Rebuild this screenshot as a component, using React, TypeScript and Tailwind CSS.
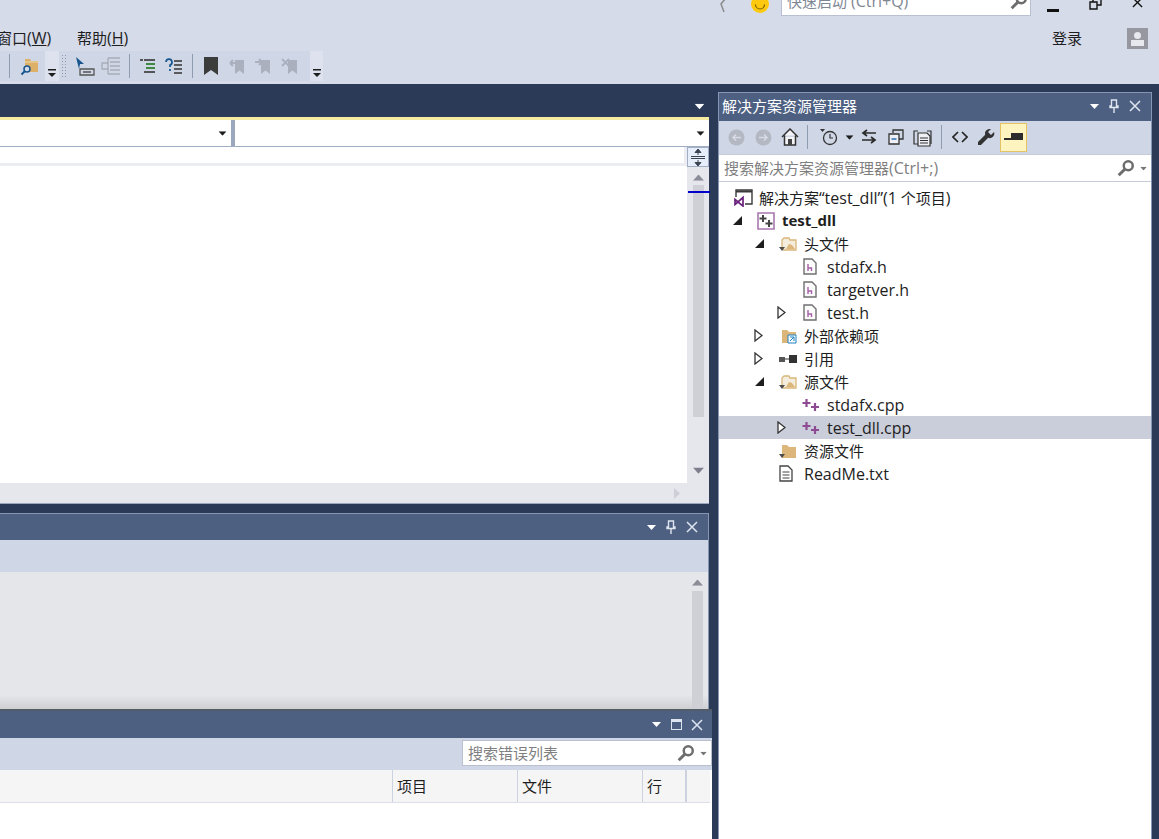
import type { ReactNode } from 'react'

const font = '[font-family:"Open_Sans","Noto_Sans_CJK_SC",sans-serif]'

// latin runs sit a pixel larger than the CJK around them, closer to the original UI font
function L({ children }: { children: ReactNode }) {
  return <span className="text-[16px]">{children}</span>
}

function Tri({ className = '' }: { className?: string }) {
  return (
    <svg width="9" height="5" viewBox="0 0 9 5" className={className}>
      <path d="M0 0h9L4.5 5z" fill="currentColor" />
    </svg>
  )
}

function Overflow() {
  return (
    <svg width="10" height="10" viewBox="0 0 10 10">
      <path d="M1 1h8v1.5H1z" fill="#1e1e1e" />
      <path d="M1 5h8L5 9z" fill="#1e1e1e" />
    </svg>
  )
}

function Pin() {
  return (
    <svg width="10" height="14" viewBox="0 0 10 14">
      <path d="M2.5 1h5v6h1.5v1.5H1V7h1.5zM5 8.5V14" fill="none" stroke="currentColor" strokeWidth="1.4" />
    </svg>
  )
}

function CloseX({ size = 12 }: { size?: number }) {
  return (
    <svg width={size} height={size} viewBox="0 0 12 12">
      <path d="M1 1l10 10M11 1L1 11" stroke="currentColor" strokeWidth="1.5" />
    </svg>
  )
}

function Search({ color = '#6d6d6d' }: { color?: string }) {
  return (
    <svg width="18" height="18" viewBox="0 0 16 16">
      <circle cx="10" cy="6" r="4" fill="none" stroke={color} strokeWidth="2.2" />
      <path d="M7 9l-5.5 5.5" stroke={color} strokeWidth="2.6" />
    </svg>
  )
}

function Sep({ className = '' }: { className?: string }) {
  return <div className={`w-px h-[24px] bg-[#8f9bb0] ${className}`} />
}

function GreyBookmark({ mark }: { mark: ReactNode }) {
  return (
    <svg width="18" height="18" viewBox="0 0 18 18">
      <path d="M7 3h9v14l-4.5-3.5L7 17z" fill="#aab0bd" />
      {mark}
    </svg>
  )
}

function FolderSearch() {
  return (
    <svg width="20" height="20" viewBox="0 0 20 20">
      <path d="M5 3h5l1 2h7v11H5z" fill="#dcb067" />
      <path d="M5 6h13" stroke="#efd9ad" strokeWidth="1" />
      <circle cx="7" cy="13" r="3" fill="#d6dbe9" stroke="#17568f" strokeWidth="1.5" />
      <path d="M5 15l-3.5 3.5" stroke="#17568f" strokeWidth="2" />
    </svg>
  )
}

function TopBar() {
  return (
    <div className="h-[84px] bg-[#d6dbe9] overflow-hidden shrink-0">
      <div className="h-[16px] flex items-end justify-end overflow-hidden">
        <svg width="8" height="14" viewBox="0 0 8 14" className="mb-[4px] mr-[2px]">
          <path d="M7 0L2 6l3 8" fill="none" stroke="#8a8a8a" strokeWidth="1.5" />
        </svg>
        <svg width="18" height="18" viewBox="0 0 18 18" className="ml-[22px] mb-[3px] shrink-0">
          <circle cx="9" cy="9" r="9" fill="#fdc90f" />
          <path d="M4.5 9.5a4.5 4.5 0 0 0 9 0" fill="none" stroke="#7a6000" strokeWidth="1.2" />
        </svg>
        <div className="ml-[12px] w-[250px] h-[30px] bg-white border border-[#b8c0d2] flex items-center justify-between pl-[5px] pr-[2px] text-[15px] text-[#7f8794] shrink-0">
          <span className={`${font} whitespace-nowrap`}>
            快速启动 <L>(Ctrl+Q)</L>
          </span>
          <Search />
        </div>
        <div className="w-[128px] flex items-center pb-[2px] text-[#111] shrink-0">
          <div className="w-[12px] h-[3px] bg-[#111] ml-[16px] mt-[5px]" />
          <svg width="13" height="13" viewBox="0 0 13 13" className="ml-[30px] -translate-y-[4px]">
            <path d="M1 5h7v7H1zM4 5V1h8v7H8" fill="none" stroke="#111" strokeWidth="1.4" />
          </svg>
          <div className="ml-[30px] -translate-y-[5px]">
            <CloseX size={11} />
          </div>
        </div>
      </div>
      <div className={`${font} h-[35px] pt-[9px] flex items-center justify-between text-[15px] text-[#1e1e1e]`}>
        <div className="flex items-center -ml-[3px]">
          <span className="w-[80px] whitespace-nowrap">
            窗口<L>(<span className="underline">W</span>)</L>
          </span>
          <span className="whitespace-nowrap">
            帮助<L>(<span className="underline">H</span>)</L>
          </span>
        </div>
        <div className="flex items-center">
          <span>登录</span>
          <div className="ml-[45px] mr-[11px] w-[21px] h-[21px] bg-[#96979f] flex flex-col items-center justify-end pb-[3px]">
            <div className="w-[7px] h-[7px] rounded-full bg-[#e8e9ee] mb-px" />
            <div className="w-[13px] h-[6px] bg-[#e8e9ee]" />
          </div>
        </div>
      </div>
      <div className="h-[30px] flex items-stretch">
        <div className="w-[45px] bg-[#cfd6e5] flex items-center">
          <Sep className="ml-[9px]" />
          <div className="ml-[10px]">
            <FolderSearch />
          </div>
        </div>
        <div className="w-[14px] bg-[#dde2ee] flex items-end justify-center pb-[3px]">
          <Overflow />
        </div>
        <div className="w-[251px] bg-[#cfd6e5] flex items-center pl-[2px]">
          <div className="w-[6px] h-[24px] bg-[radial-gradient(#8f97a8_1px,transparent_1px)] bg-[length:3px_3px]" />
          <svg width="20" height="20" viewBox="0 0 20 20" className="ml-[8px]">
            <path d="M5 13h14v6H5z" fill="none" stroke="#555" strokeWidth="1.3" />
            <path d="M8 16h8" stroke="#555" strokeWidth="1.5" />
            <path d="M1 1l8 7H5l-1 5z" fill="#17568f" />
          </svg>
          <svg width="20" height="20" viewBox="0 0 20 20" className="ml-[6px]">
            <path d="M7 2h12M9 6h10M9 10h10M9 14h10M7 18h12M7 2v16M1 7h6v6H1z" fill="none" stroke="#a9aeb8" strokeWidth="1.4" />
          </svg>
          <Sep className="ml-[8px]" />
          <svg width="16" height="16" viewBox="0 0 16 16" className="ml-[10px]">
            <path d="M0 2h3M4 2h11M6 6h9M6 10h9M4 14h11" stroke="#2b2b2b" strokeWidth="1.3" />
            <path d="M6 6h9M6 10h9" stroke="#3a9a3a" strokeWidth="1.6" />
          </svg>
          <svg width="18" height="16" viewBox="0 0 18 16" className="ml-[9px]">
            <path d="M1 4a3 3 0 1 1 4 3v2M5 11v2" fill="none" stroke="#17568f" strokeWidth="1.7" />
            <path d="M9 3h8M9 7h8M9 11h8M9 15h8" stroke="#333" strokeWidth="1.3" />
          </svg>
          <Sep className="ml-[9px]" />
          <svg width="18" height="20" viewBox="0 0 18 20" className="ml-[9px]">
            <path d="M2 1h14v18l-7-5-7 5z" fill="#3c3c3c" />
          </svg>
          <div className="ml-[8px]">
            <GreyBookmark mark={<path d="M9 6H2M2 6l3-3M2 6l3 3" fill="none" stroke="#aab0bd" strokeWidth="1.8" />} />
          </div>
          <div className="ml-[8px]">
            <GreyBookmark mark={<path d="M1 5h7M8 5L5 2M8 5L5 8" fill="none" stroke="#aab0bd" strokeWidth="1.8" />} />
          </div>
          <div className="ml-[9px]">
            <GreyBookmark mark={<path d="M1 2l7 7M8 2L1 9" fill="none" stroke="#aab0bd" strokeWidth="1.8" />} />
          </div>
        </div>
        <div className="w-[13px] bg-[#dde2ee] flex items-end justify-center pb-[3px]">
          <Overflow />
        </div>
      </div>
    </div>
  )
}

function TitleIcons({ restore }: { restore?: boolean }) {
  return (
    <div className="flex items-center text-[#dfe5ef]">
      <Tri className="text-white" />
      <div className="ml-[9px] w-[12px] flex justify-center">
        {restore ? <div className="w-[11px] h-[11px] border border-t-[3px] border-[#dfe5ef]" /> : <Pin />}
      </div>
      <div className="ml-[9px]">
        <CloseX />
      </div>
    </div>
  )
}

function Editor() {
  return (
    <div className="h-[420px] flex flex-col shrink-0">
      <div className="h-[33px] pt-[11px] flex justify-end items-center pr-[5px] text-white">
        <Tri className="scale-110" />
      </div>
      <div className="h-[3px] bg-[#f4eba0]" />
      <div className="h-[26px] bg-white flex">
        <div className="w-[231px] flex items-center justify-end pr-[4px] text-[#1e1e1e]">
          <Tri className="scale-90" />
        </div>
        <div className="w-[4px] bg-[#9aa7bf]" />
        <div className="flex-1 flex items-center justify-end pr-[4px] text-[#1e1e1e]">
          <Tri className="scale-90" />
        </div>
      </div>
      <div className="h-px bg-[#a0adc3]" />
      <div className="flex-1 flex min-h-0">
        <div className="flex-1 flex flex-col bg-white min-w-0">
          <div className="h-[19px] bg-[#ecedf2] pb-[3px]">
            <div className="h-full w-[684px] bg-white" />
          </div>
          <div className="flex-1" />
        </div>
        <div className="w-[22px] bg-[#e6e7ed] flex flex-col items-center">
          <div className="w-full h-[20px] bg-[#e6edfb] border border-[#a0adc3] flex items-center justify-center shrink-0">
            <svg width="14" height="17" viewBox="0 0 14 17">
              <path d="M0 7.5h14M0 9.5h14" stroke="#3c4452" strokeWidth="1" />
              <path d="M7 0l3 3.5H4zM7 17l-3-3.5h6zM7 3v3M7 11v3" fill="#3c4452" stroke="#3c4452" />
            </svg>
          </div>
          <Tri className="text-[#8b8d99] mt-[8px] rotate-180 scale-125 shrink-0" />
          <div className="relative w-[11px] h-[232px] bg-[#cfd0d6] mt-[5px] shrink-0">
            <div className="absolute top-[6px] -left-[5px] w-[22px] h-[2px] bg-[#0000cc]" />
          </div>
          <div className="flex-1" />
          <div className="h-[25px] flex items-center">
            <Tri className="text-[#7d7f8e] scale-125" />
          </div>
        </div>
      </div>
      <div className="h-[20px] bg-[#e6e7ed] flex items-center justify-end pr-[29px]">
        <svg width="6" height="11" viewBox="0 0 6 11">
          <path d="M0 0l6 5.5L0 11z" fill="#cdced6" />
        </svg>
      </div>
      <div className="h-px bg-[#9aa7bf]" />
    </div>
  )
}

function OutputPanel() {
  return (
    <div className="mt-[9px] h-[196px] flex flex-col border-t border-r border-[#8496b3] shrink-0">
      <div className="h-[26px] bg-[#4d6082] flex items-center justify-end pr-[10px] shrink-0">
        <TitleIcons />
      </div>
      <div className="h-[32px] bg-[#cfd6e5] shrink-0" />
      <div className="flex-1 bg-[#e5e6e9] flex flex-col items-end pr-[5px] bg-gradient-to-b from-[#e5e6e9] from-[90%] to-[#cfd0d2]">
        <div className="w-[11px] flex flex-col items-center flex-1">
          <Tri className="text-[#8b8d99] mt-[8px] rotate-180 scale-125" />
          <div className="w-[11px] flex-1 bg-[#cfd0d6] mt-[6px]" />
        </div>
      </div>
    </div>
  )
}

function ErrorPanel() {
  return (
    <div className={`${font} w-[712px] flex-1 flex flex-col min-h-0 border-t-2 border-[#555c69] bg-white`}>
      <div className="h-[27px] bg-[#4d6082] flex items-center justify-end pr-[9px] shrink-0">
        <TitleIcons restore />
      </div>
      <div className="h-[32px] bg-[#cfd6e5] flex justify-end pt-[2px] shrink-0">
        <div className="w-[250px] h-[26px] bg-white border border-[#b8c0d2] flex items-center justify-between pl-[5px] pr-[3px]">
          <span className="text-[15px] text-[#7f7f7f]">搜索错误列表</span>
          <div className="flex items-center gap-[4px]">
            <Search />
            <Tri className="text-[#777] scale-75" />
          </div>
        </div>
      </div>
      <div className="h-[33px] w-[710px] flex bg-[#f5f5f6] border-b border-[#dcdfea] text-[15px] text-[#1e1e1e] shrink-0">
        <div className="w-[393px] border-r border-[#cdd2e0]" />
        <div className="w-[125px] border-r border-[#cdd2e0] flex items-center pl-[4px]">项目</div>
        <div className="w-[125px] border-r border-[#cdd2e0] flex items-center pl-[4px]">文件</div>
        <div className="w-[44px] border-r-2 border-[#cdd2e0] flex items-center pl-[4px]">行</div>
      </div>
    </div>
  )
}

function FileH() {
  return (
    <svg width="16" height="17" viewBox="0 0 16 17">
      <path d="M2 1h8l4 4v11H2z" fill="#fbfbfb" stroke="#6f6f6f" strokeWidth="1.4" />
      <path d="M6 6v7M6 10h3.5v3" fill="none" stroke="#a65fa8" strokeWidth="1.4" />
    </svg>
  )
}

function CppIcon() {
  return (
    <svg width="18" height="12" viewBox="0 0 18 12">
      <path d="M4.5 0v8M.5 4h8" stroke="#8e4a92" strokeWidth="2.2" />
      <path d="M13 4v8M9 8h8" stroke="#8e4a92" strokeWidth="2.2" />
    </svg>
  )
}

function FolderIcon({ filter, badge }: { filter?: boolean; badge?: boolean }) {
  return (
    <svg width="18" height="16" viewBox="0 0 18 16">
      {filter ? (
        <path d="M3 12V4l2-2h5l1 2h6v10H4" fill="#f4ecdc" stroke="#d9b679" strokeWidth="1.3" />
      ) : (
        <path d="M3 2h5l2 2h7v11H3z" fill="#dcb67a" />
      )}
      {filter && <path d="M7 13l3-5 3 1 3 4z" fill="#dcb67a" />}
      {(filter || !badge) && <path d="M0 11h6L3 15z" fill="#4d4d4d" />}
      {badge && <path d="M9 7h8v8H9z" fill="#fff" stroke="#1b80c4" strokeWidth="1" />}
      {badge && <path d="M11 9h4v4M15 9l-4 4" fill="none" stroke="#1b80c4" strokeWidth="1" />}
    </svg>
  )
}

const SolutionIcon = (
  <svg width="19" height="18" viewBox="0 0 19 18">
    <path d="M2 8V1h16v14h-7" fill="none" stroke="#3a3a3a" strokeWidth="1.4" />
    <path d="M2 2.5h16" stroke="#3a3a3a" strokeWidth="2" />
    <path d="M1 10.5l3 2.5 5-4.5v8.500L4 13l-3 2.5z" fill="none" stroke="#68217a" strokeWidth="1.7" />
  </svg>
)

const ProjectIcon = (
  <svg width="18" height="18" viewBox="0 0 18 18">
    <path d="M1 1h16v16H1z" fill="#fff" stroke="#a877ae" strokeWidth="1.6" />
    <path d="M6 3v7M2.500 6.500h7" stroke="#444" strokeWidth="2" />
    <path d="M12 8v7M8.500 11.500h7" stroke="#444" strokeWidth="2" />
  </svg>
)

const RefIcon = (
  <svg width="18" height="10" viewBox="0 0 18 10">
    <path d="M0 3h6v5H0z" fill="#555" />
    <path d="M6 5h4" stroke="#555" strokeWidth="1.2" />
    <path d="M10 1h8v8h-8z" fill="#333" />
  </svg>
)

const TxtIcon = (
  <svg width="14" height="17" viewBox="0 0 14 17">
    <path d="M1 1h8l4 4v11H1z" fill="#fff" stroke="#444" strokeWidth="1.3" />
    <path d="M3.5 7h7M3.5 10h7M3.5 13h7" stroke="#444" strokeWidth="1.1" />
  </svg>
)

type Row = {
  label: ReactNode
  icon: ReactNode
  pad: string
  arrow?: 'open' | 'closed'
  bold?: boolean
  selected?: boolean
}

const rows: Row[] = [
  { label: <>解决方案<L>“test_dll”(1</L> 个项目<L>)</L></>, icon: SolutionIcon, pad: 'pl-[15px]' },
  { label: 'test_dll', icon: ProjectIcon, pad: 'pl-[13px]', arrow: 'open', bold: true },
  { label: '头文件', icon: <FolderIcon filter />, pad: 'pl-[35px]', arrow: 'open' },
  { label: <L>stdafx.h</L>, icon: <FileH />, pad: 'pl-[58px]' },
  { label: <L>targetver.h</L>, icon: <FileH />, pad: 'pl-[58px]' },
  { label: <L>test.h</L>, icon: <FileH />, pad: 'pl-[58px]', arrow: 'closed' },
  { label: '外部依赖项', icon: <FolderIcon badge />, pad: 'pl-[35px]', arrow: 'closed' },
  { label: '引用', icon: RefIcon, pad: 'pl-[35px]', arrow: 'closed' },
  { label: '源文件', icon: <FolderIcon filter />, pad: 'pl-[35px]', arrow: 'open' },
  { label: <L>stdafx.cpp</L>, icon: <CppIcon />, pad: 'pl-[58px]' },
  { label: <L>test_dll.cpp</L>, icon: <CppIcon />, pad: 'pl-[58px]', arrow: 'closed', selected: true },
  { label: '资源文件', icon: <FolderIcon />, pad: 'pl-[35px]' },
  { label: <L>ReadMe.txt</L>, icon: TxtIcon, pad: 'pl-[35px]' },
]

function Arrow({ kind }: { kind?: 'open' | 'closed' }) {
  if (kind === 'open') {
    return (
      <svg width="11" height="11" viewBox="0 0 11 11">
        <path d="M10 1v9H1z" fill="#1e1e1e" />
      </svg>
    )
  }
  if (kind === 'closed') {
    return (
      <svg width="9" height="13" viewBox="0 0 9 13">
        <path d="M1 1l7 5.5L1 12z" fill="#fff" stroke="#333" strokeWidth="1.3" />
      </svg>
    )
  }
  return null
}

function TreeRow({ row, root }: { row: Row; root?: boolean }) {
  // plain CJK labels render a pixel high next to the latin ones
  const nudge = typeof row.label === 'string' && !row.bold ? 'pt-[2px]' : ''
  return (
    <div className={`h-[23px] flex items-center text-[15px] text-[#1e1e1e] ${row.selected ? 'bg-[#cacdda]' : ''} ${row.pad}`}>
      {!root && (
        <div className="w-[25px] flex items-center shrink-0">
          <Arrow kind={row.arrow} />
        </div>
      )}
      <div className="w-[25px] flex items-center shrink-0">{row.icon}</div>
      <span className={`whitespace-nowrap ${row.bold ? 'font-bold' : ''} ${nudge}`}>{row.label}</span>
    </div>
  )
}

function SolutionExplorer() {
  return (
    <div className={`${font} ml-[9px] w-[434px] mt-[8px] flex flex-col border-t border-l border-r border-[#8496b3] bg-white`}>
      <div className="h-[28px] pb-[2px] bg-[#4d6082] flex items-center justify-between pl-[3px] pr-[10px] shrink-0">
        <span className="text-[15px] text-white">解决方案资源管理器</span>
        <TitleIcons />
      </div>
      <div className="h-[33px] pb-[1px] bg-[#cfd6e5] flex items-center pl-[9px] shrink-0">
        <svg width="17" height="17" viewBox="0 0 17 17">
          <circle cx="8.5" cy="8.5" r="8" fill="#b4b8c2" />
          <path d="M13 8.5H5M8 5.5l-3 3 3 3" fill="none" stroke="#d6dbe6" strokeWidth="1.5" />
        </svg>
        <svg width="17" height="17" viewBox="0 0 17 17" className="ml-[10px]">
          <circle cx="8.5" cy="8.5" r="8" fill="#b4b8c2" />
          <path d="M4 8.5h8M9 5.5l3 3-3 3" fill="none" stroke="#d6dbe6" strokeWidth="1.5" />
        </svg>
        <svg width="18" height="18" viewBox="0 0 18 18" className="ml-[9px]">
          <path d="M1 9l8-8 8 8M3.5 7.5V17h11V7.5" fill="#f4f4f6" stroke="#333" strokeWidth="1.5" />
          <path d="M7 17v-6h4v6" fill="#444" />
        </svg>
        <div className="w-px h-[24px] bg-[#8f9bb0] ml-[8px]" />
        <svg width="18" height="18" viewBox="0 0 18 18" className="ml-[12px]">
          <path d="M0 1h5L2.500 4z" fill="#333" />
          <circle cx="10" cy="10" r="6.5" fill="none" stroke="#333" strokeWidth="1.3" />
          <path d="M10 6v4h3" fill="none" stroke="#333" strokeWidth="1.2" />
        </svg>
        <Tri className="text-[#1e1e1e] ml-[7px] scale-90" />
        <svg width="16" height="16" viewBox="0 0 16 16" className="ml-[7px]">
          <path d="M15 4H3M6 1L2 4l4 3M1 11h12M10 8l4 3-4 3" fill="none" stroke="#2b2b2b" strokeWidth="1.7" />
        </svg>
        <svg width="16" height="16" viewBox="0 0 16 16" className="ml-[11px]">
          <path d="M5 4V1h10v9h-4" fill="none" stroke="#333" strokeWidth="1.3" />
          <path d="M1 5h10v10H1z" fill="#eef0f5" stroke="#333" strokeWidth="1.3" />
          <path d="M3.500 10h5" stroke="#2a6fb0" strokeWidth="1.5" />
        </svg>
        <svg width="19" height="19" viewBox="0 0 19 19" className="ml-[9px]">
          <path d="M5 3H1v13h4M14 3h4v13" fill="none" stroke="#333" strokeWidth="1.2" />
          <path d="M5 5h9l3 3v10H5z" fill="#eef0f5" stroke="#333" strokeWidth="1.2" />
          <path d="M7 10h8M7 12.5h8M7 15h8" stroke="#333" strokeWidth="1" />
        </svg>
        <div className="w-px h-[24px] bg-[#8f9bb0] ml-[9px]" />
        <svg width="16" height="12" viewBox="0 0 16 12" className="ml-[10px]">
          <path d="M6 1L1 6l5 5M10 1l5 5-5 5" fill="none" stroke="#222" strokeWidth="1.6" />
        </svg>
        <svg width="18" height="18" viewBox="0 0 18 18" className="ml-[9px]">
          <path d="M12.5 1a4.5 4.5 0 0 0-4.3 5.8L1 14v3h3l7.200-7.200A4.500 4.500 0 0 0 17 4l-3 3-3-3 3-3a4.500 4.500 0 0 0-1.500 0z" fill="#333" />
        </svg>
        <div className="ml-[5px] w-[27px] h-[29px] bg-[#fdf4bf] border border-[#e5c365] flex items-center justify-center">
          <svg width="19" height="8" viewBox="0 0 19 8">
            <path d="M7 0h12v5H7zM0 5h19v2H0z" fill="#2b2b2b" />
          </svg>
        </div>
      </div>
      <div className="h-[28px] bg-white border-t border-b border-[#c4ccdc] flex items-center justify-between pl-[5px] pr-[3px] shrink-0">
        <span className="text-[15px] text-[#7f7f7f]">
          搜索解决方案资源管理器<L>(Ctrl+;)</L>
        </span>
        <div className="flex items-center gap-[4px]">
          <Search />
          <Tri className="text-[#777] scale-75" />
        </div>
      </div>
      <div className="pt-[4px]">
        {rows.map((row, i) => (
          <TreeRow key={i} row={row} root={i === 0} />
        ))}
      </div>
    </div>
  )
}

export default function App() {
  return (
    <div className={`${font} w-[1159px] h-[839px] overflow-hidden flex flex-col bg-[#2a3a57]`}>
      <TopBar />
      <div className="flex-1 flex min-h-0">
        <div className="w-[709px] flex flex-col shrink-0">
          <Editor />
          <OutputPanel />
          <ErrorPanel />
        </div>
        <SolutionExplorer />
      </div>
    </div>
  )
}
